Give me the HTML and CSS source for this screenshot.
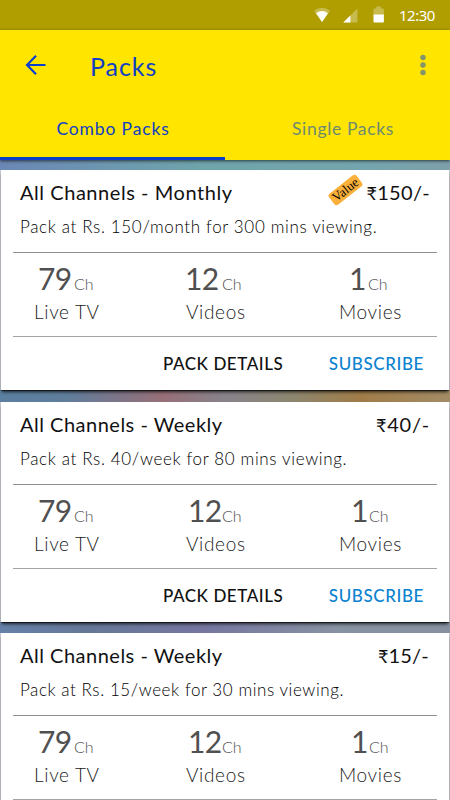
FILE: index.html
```html
<!DOCTYPE html>
<html lang="en">
<head>
<meta charset="utf-8">
<title>Packs</title>
<link rel="stylesheet" href="styles.css">
</head>
<body>
<div class="app">
  <div class="statusbar">
    <svg class="status-icons" width="90" height="30" viewBox="0 0 90 30">
      <path d="M0 10.600Q8.500 4 17 10.600L8.500 22.500Z" fill="#fff" opacity=".3"/>
      <path d="M2.200 13.200Q8.500 8.200 14.800 13.200L8.500 22.500Z" fill="#fff"/>
      <path d="M31 23L46 8V23Z" fill="#fff" opacity=".3"/>
      <path d="M31 23L38.500 15.500V23Z" fill="#fff"/>
      <path d="M63 15V9a1 1 0 0 1 1-1h2V6h5v2h2a1 1 0 0 1 1 1v6Z" fill="#fff" opacity=".3"/>
      <path d="M63 14.500H74V22a1 1 0 0 1-1 1H64a1 1 0 0 1-1-1Z" fill="#fff"/>
    </svg>
    <span class="clock">12:30</span>
  </div>
  <header class="header">
    <div class="toolbar">
      <svg class="back" width="22" height="22" viewBox="0 0 22 22" fill="none" stroke="#0a3fd0" stroke-width="2.200"><path d="M20.500 11H3M11 1.800L2 11L11 20.200"/></svg>
      <h1 class="title">Packs</h1>
      <svg class="more" width="6" height="22" viewBox="0 0 6 22" fill="#82946a"><circle cx="3" cy="3.500" r="2.700"/><circle cx="3" cy="11" r="2.700"/><circle cx="3" cy="18.500" r="2.700"/></svg>
    </div>
    <nav class="tabs">
      <div class="tab active"><span class="combo">Combo Packs</span></div>
      <div class="tab"><span class="single">Single Packs</span></div>
    </nav>
  </header>
  <main class="list">
    <section class="card">
      <div class="head"><h2 class="name monthly">All Channels - Monthly</h2><span class="badge">Value</span><span class="price p150"><span class="rupee">₹</span>150/-</span></div>
      <p class="desc">Pack at Rs. 150/month for 300 mins viewing.</p>
      <div class="stats">
        <div class="stat tv"><div class="figure"><b>79</b><i>Ch</i></div><div class="label">Live TV</div></div>
        <div class="stat videos wide"><div class="figure"><b>12</b><i>Ch</i></div><div class="label">Videos</div></div>
        <div class="stat movies first"><div class="figure"><b>1</b><i>Ch</i></div><div class="label">Movies</div></div>
      </div>
      <div class="actions"><span class="details">PACK DETAILS</span><span class="subscribe">SUBSCRIBE</span></div>
    </section>
    <section class="card">
      <div class="head"><h2 class="name weekly">All Channels - Weekly</h2><span class="price p40"><span class="rupee">₹</span>40/-</span></div>
      <p class="desc">Pack at Rs. 40/week for 80 mins viewing.</p>
      <div class="stats">
        <div class="stat tv"><div class="figure"><b>79</b><i>Ch</i></div><div class="label">Live TV</div></div>
        <div class="stat videos"><div class="figure"><b>12</b><i>Ch</i></div><div class="label">Videos</div></div>
        <div class="stat movies"><div class="figure"><b>1</b><i>Ch</i></div><div class="label">Movies</div></div>
      </div>
      <div class="actions"><span class="details">PACK DETAILS</span><span class="subscribe">SUBSCRIBE</span></div>
    </section>
    <section class="card last">
      <div class="head"><h2 class="name weekly">All Channels - Weekly</h2><span class="price p15"><span class="rupee">₹</span>15/-</span></div>
      <p class="desc d15">Pack at Rs. 15/week for 30 mins viewing.</p>
      <div class="stats">
        <div class="stat tv"><div class="figure"><b>79</b><i>Ch</i></div><div class="label">Live TV</div></div>
        <div class="stat videos"><div class="figure"><b>12</b><i>Ch</i></div><div class="label">Videos</div></div>
        <div class="stat movies"><div class="figure"><b>1</b><i>Ch</i></div><div class="label">Movies</div></div>
      </div>
    </section>
  </main>
</div>
</body>
</html>
```
FILE: styles.css
```css
* { box-sizing: border-box; margin: 0; padding: 0; }
body { width: 450px; height: 800px; overflow: hidden; font-family: Lato, "Open Sans", sans-serif; color: #111; }
.app { display: flex; flex-direction: column; height: 800px; overflow: hidden; }
.statusbar { flex: none; height: 30px; display: flex; align-items: center; padding-left: 314px; background: #b09e00; color: #fff; }
.status-icons { flex: none; width: 85px; }
.clock { font: 15px/30px "Noto Sans", sans-serif; letter-spacing: -0.5px; white-space: nowrap; }
.header { flex: none; height: 130px; background: #ffe500; position: relative; box-shadow: 0 1px 3px rgba(0,0,0,.65); }
.toolbar { height: 70px; display: flex; align-items: center; padding: 0 24px 0 25px; color: #1040c4; }
.back { margin-right: 43px; }
.title { font-size: 25px; font-weight: 400; letter-spacing: .95px; line-height: 30px; margin-top: 1px; }
.more { margin-left: auto; }
.tabs { display: flex; height: 60px; }
.tab { width: 225px; text-align: center; font-size: 17.500px; line-height: 58px; color: #6d8a70; padding-left: 11px; }
.active { color: #1040c4; padding: 0 0 0 1px; border-bottom: 3px solid #0a3fcb; }
.combo { letter-spacing: .85px; }
.single { letter-spacing: .65px; }
.list { flex: 1; display: flex; flex-direction: column; gap: 12px; padding: 10px 1px 0; overflow: hidden;
  background:
    linear-gradient(90deg, #6b87b5 0, #6fa4aa 45%, #74a5ae 80%, #7da0aa) 0 0 / 100% 10px no-repeat,
    linear-gradient(90deg, #5b7fa0 0, #607d9b 15%, #976f78 36%, #88838b 50%, #8c866f 65%, #a17c48 80%, #a28c66) 0 230px / 100% 12px no-repeat,
    linear-gradient(90deg, #6580a8, #667898 20%, #7676a0 45%, #8792a2 75%, #8791a0) 0 462px / 100% 11px no-repeat,
    #c6cad2; }
.card { flex: none; height: 220px; background: #fff; box-shadow: 0 3px 3px -1px #000b, 0 1px 0 #222a; padding: 0 12px; }
.card.last { margin-top: -1px; }
.head { display: flex; align-items: center; height: 44px; padding: 0 7px; }
.name { font-size: 20px; line-height: 26px; font-weight: 400; white-space: nowrap; }
.monthly { letter-spacing: .55px; }
.weekly { letter-spacing: .5px; }
.price { margin-left: auto; font-size: 20px; line-height: 26px; white-space: nowrap; letter-spacing: .5px; }
.rupee { font-size: 18px; }
.p150 { letter-spacing: .3px; }
.p40 { letter-spacing: .8px; }
.p15 { letter-spacing: .2px; padding-right: 1px; }
.badge { margin-left: 95px; margin-top: -4px; width: 35px; height: 14px; border-radius: 3px; background: #fbb03b; color: #000; font: 13px/13px "Liberation Serif", serif; text-align: center; transform: rotate(-38deg); }
.desc { height: 38px; padding: 1px 7px 0; font-size: 17px; line-height: 24px; font-weight: 300; color: #000; white-space: nowrap; letter-spacing: .65px; }
.d15 { letter-spacing: .57px; }
.stats { height: 85px; display: grid; grid-template-columns: 149px 149px 1fr; border-top: 1px solid #8f8f8f; border-bottom: 1px solid #a5a5a5; }
.figure { height: 47px; line-height: 50px; white-space: nowrap; color: #505050; }
.figure b { display: inline-block; font-weight: 400; font-size: 30px; letter-spacing: -.6px; }
.figure i { font-style: normal; font-weight: 300; font-size: 16px; }
.label { font-size: 19px; line-height: 24px; font-weight: 300; color: #222; letter-spacing: .65px; }
.tv { padding-left: 21px; }
.tv .figure { padding-left: 4px; }
.tv b { width: 36px; }
.videos { padding-left: 24px; }
.videos .figure { padding-left: 2px; }
.videos b { width: 34px; }
.videos.wide .figure { padding-left: 0; margin-left: -1px; }
.videos.wide b { width: 37px; }
.movies { padding-left: 28px; }
.movies .figure { padding-left: 12px; }
.movies b { width: 18px; }
.movies.first .figure { padding-left: 10px; }
.movies.first b { width: 19px; }
.actions { display: flex; justify-content: flex-end; padding-right: 13px; font-size: 17px; line-height: 54px; font-weight: 500; }
.details { margin-right: 45.500px; letter-spacing: .55px; }
.subscribe { color: #0b82d0; letter-spacing: .6px; }
```
